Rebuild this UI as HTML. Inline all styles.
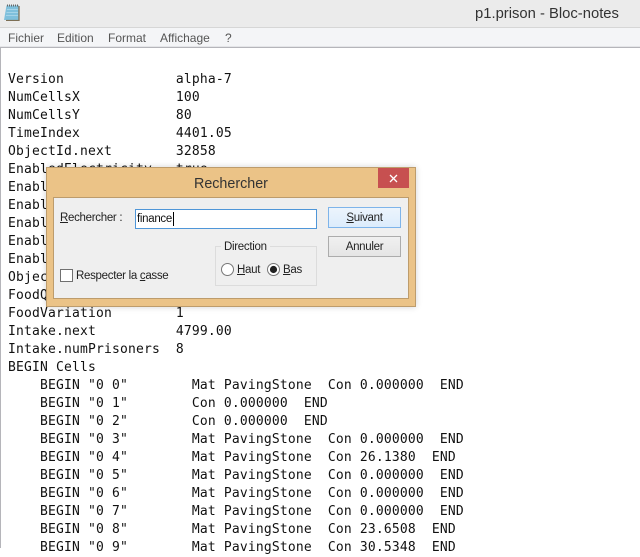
<!DOCTYPE html>
<html><head><meta charset="utf-8"><style>
html,body{margin:0;padding:0;width:640px;height:548px;overflow:hidden;background:#fff}
*{box-sizing:border-box}
.a{position:absolute}
.ui{font-family:"Liberation Sans",sans-serif;font-size:11.5px;letter-spacing:-.3px;color:#222;white-space:nowrap;line-height:14px}
.m{color:#555;font-size:12px;letter-spacing:0}
#t{position:absolute;left:8px;top:71px;margin:0;font-family:"DejaVu Sans Mono","Liberation Mono",monospace;font-size:13px;line-height:18px;color:#111;letter-spacing:.17px;white-space:pre}
u{text-decoration:underline}
</style></head><body>
<div class="a" style="left:0;top:0;width:640px;height:27px;background:#ebebeb"></div>
<div class="a" style="left:0;top:27px;width:640px;height:1px;background:#d6d6d6"></div>
<div class="a" style="left:0;top:28px;width:640px;height:18px;background:#f4f5f7"></div>
<div class="a" style="left:0;top:46px;width:640px;height:1px;background:#e4e5e8"></div>
<div class="a" style="left:0;top:47px;width:640px;height:1px;background:#b5b5ba"></div>
<div class="a" style="left:0;top:48px;width:1px;height:500px;background:#b5b5ba"></div>
<svg class="a" style="left:3px;top:3px" width="17" height="18" viewBox="0 0 17 18"><path d="M3.5 2.5H16V17H1Z" fill="#7fc0dc"/><path d="M16 3V17.5H3" fill="none" stroke="#7d6f55" stroke-width="1.3"/><path d="M4 6.5H15M3.5 9.5H15M3 12.5H15" stroke="#a5d4e8"/><path d="M4 2.5H15" stroke="#666" stroke-dasharray="1 1" stroke-width="2"/></svg>
<div class="a" style="left:475px;top:6px;font:14.8px/16px 'Liberation Sans',sans-serif;color:#333;white-space:nowrap">p1.prison - Bloc-notes</div>
<div class="a ui m" style="left:8px;top:31px">Fichier</div>
<div class="a ui m" style="left:57px;top:31px">Edition</div>
<div class="a ui m" style="left:108px;top:31px">Format</div>
<div class="a ui m" style="left:160px;top:31px">Affichage</div>
<div class="a ui m" style="left:225px;top:31px">?</div>
<pre id="t">Version              alpha-7
NumCellsX            100
NumCellsY            80
TimeIndex            4401.05
ObjectId.next        32858
EnabledElectricity   true
EnabledWater         true
EnabledFood          true
EnabledMisconduct    true
EnabledGangs         true
EnabledVisibility    true
ObjectiveNext        100
FoodQuality          1
FoodVariation        1
Intake.next          4799.00
Intake.numPrisoners  8
BEGIN Cells
    BEGIN "0 0"        Mat PavingStone  Con 0.000000  END
    BEGIN "0 1"        Con 0.000000  END
    BEGIN "0 2"        Con 0.000000  END
    BEGIN "0 3"        Mat PavingStone  Con 0.000000  END
    BEGIN "0 4"        Mat PavingStone  Con 26.1380  END
    BEGIN "0 5"        Mat PavingStone  Con 0.000000  END
    BEGIN "0 6"        Mat PavingStone  Con 0.000000  END
    BEGIN "0 7"        Mat PavingStone  Con 0.000000  END
    BEGIN "0 8"        Mat PavingStone  Con 23.6508  END
    BEGIN "0 9"        Mat PavingStone  Con 30.5348  END</pre>

<div class="a" style="left:46px;top:167px;width:370px;height:140px;background:#ebc387;border:1px solid #bd9c6c;box-shadow:0 0 6px rgba(0,0,0,.18)"></div>
<div class="a" style="left:378px;top:168px;width:31px;height:20px;background:#c75050"></div>
<svg class="a" style="left:388px;top:173px" width="11" height="11" viewBox="0 0 11 11"><path d="M2 2L9 9M9 2L2 9" stroke="#fff" stroke-width="1.3"/></svg>
<div class="a" style="left:194px;top:176px;font:14.3px/16px 'Liberation Sans',sans-serif;color:#333;white-space:nowrap">Rechercher</div>
<div class="a" style="left:53px;top:197px;width:356px;height:102px;background:#efefef;border:1px solid #bd9c6c"></div>
<div class="a ui" style="left:60px;top:211px"><u>R</u>echercher :</div>
<div class="a" style="left:135px;top:209px;width:182px;height:20px;background:#fff;border:1px solid #4f96d8"></div>
<div class="a ui" style="left:137px;top:212px;color:#111">finance</div>
<div class="a" style="left:173px;top:212px;width:1px;height:14px;background:#000"></div>
<div class="a ui" style="left:328px;top:207px;width:73px;height:21px;background:linear-gradient(#ecf4fc,#dcecfc);border:1px solid #7eb4ea;text-align:center;line-height:21px"><u>S</u>uivant</div>
<div class="a ui" style="left:328px;top:236px;width:73px;height:21px;background:linear-gradient(#f0f0f0,#e5e5e5);border:1px solid #acacac;text-align:center;line-height:21px">Annuler</div>
<div class="a" style="left:215px;top:246px;width:102px;height:40px;border:1px solid #dcdcdc"></div>
<div class="a ui" style="left:221px;top:240px;background:#efefef;padding:0 3px;line-height:15px">Direction</div>
<svg class="a" style="left:220px;top:262px" width="62" height="15" viewBox="0 0 62 15"><circle cx="7.5" cy="7.5" r="6" fill="#fff" stroke="#777"/><circle cx="53.5" cy="7.5" r="6" fill="#fff" stroke="#777"/><circle cx="53.5" cy="7.5" r="3.6" fill="#222"/></svg>
<div class="a ui" style="left:237px;top:263px"><u>H</u>aut</div>
<div class="a ui" style="left:283px;top:263px"><u>B</u>as</div>
<div class="a" style="left:60px;top:269px;width:13px;height:13px;background:#fff;border:1px solid #707070"></div>
<div class="a ui" style="left:76px;top:269px">Respecter la <u>c</u>asse</div>
</body></html>
